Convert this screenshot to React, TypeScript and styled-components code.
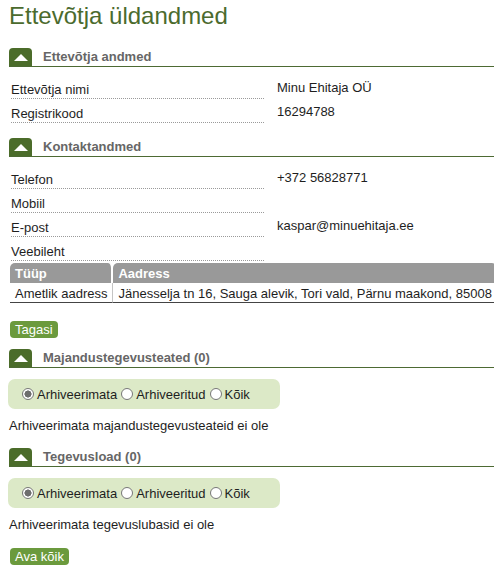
import React, {FC} from 'react'
import styled, {createGlobalStyle} from 'styled-components'

const Global = createGlobalStyle`
html, body { overflow-x: hidden; }
body {
  margin: 0;
  padding: 0 0 0 9px;
  background: #fff;
  color: #1e1e1e;
  font-family: "Liberation Sans", Arial, sans-serif;
  font-size: 13px;
  line-height: 15px;
}
* { box-sizing: border-box; }
`

const Title = styled.h1`
margin: 2px 0 0;
font-size: 24px;
line-height: 27px;
font-weight: normal;
color: #4b6b2e;
`

const Head = styled.div<{top: number}>`
display: flex;
align-items: flex-end;
height: 19px;
margin-top: ${p => p.top}px;
border-bottom: 1px solid #4d6a33;
span {
  font-weight: bold;
  color: #666;
  padding: 0 0 2px 11px;
}
`

const Tab = styled.div`
width: 23px;
height: 18px;
background: #4b6c2a;
border-radius: 4px 4px 0 0;
display: flex;
align-items: center;
justify-content: center;
svg { width: 14px; height: 7px; margin-top: 1px; }
`

const Rows = styled.div`
margin: 8px 0 0 2px;
`

const Row = styled.div`
display: grid;
grid-template-columns: 253px 1fr;
column-gap: 13px;
height: 24px;
.label {
  padding-top: 7px;
  border-bottom: 1px dotted #9a9a9a;
}
.value {
  padding-top: 5px;
}
`

const Table = styled.table`
margin: 2px 0 0 1px;
border-collapse: separate;
border-spacing: 0;
white-space: nowrap;
th {
  background: #999;
  color: #fff;
  font-weight: bold;
  text-align: left;
  height: 20px;
  padding: 1px 5px 0;
  border-radius: 5px 5px 0 0;
}
th:first-child { width: 103px; border-right: 2px solid #fff; }
td {
  height: 20px;
  padding: 1px 5px 0;
  border-bottom: 1px solid #444;
}
td:first-child { border-right: 1px solid #c4c4c4; }
`

const Button = styled.button<{top: number}>`
display: block;
margin: ${p => p.top}px 0 0 1px;
height: 17px;
padding: 0 5px;
border: none;
border-radius: 4px;
background: #6b9a3d;
color: #fff;
font-family: inherit;
font-size: 13px;
line-height: 17px;
`

const Filter = styled.div`
display: flex;
align-items: center;
width: 272px;
height: 30px;
margin: 11px 0 0 -1px;
padding-left: 14px;
background: #dce9c7;
border-radius: 7px;
label { display: flex; align-items: center; margin-right: 4px; }
input {
  appearance: none;
  width: 12px;
  height: 12px;
  margin: 0 3px 0 0;
  border: 1px solid #777;
  border-radius: 50%;
  background: #fff;
}
input:checked {
  background: radial-gradient(circle, #6d6d6d 0 3.3px, #fff 3.8px);
}
`

const Note = styled.p`
margin: 9px 0 0;
`

const Arrow: FC = () => (
  <svg viewBox="0 0 14 7"><polygon points="0,7 7,0 14,7" fill="#fff" /></svg>
)

const SectionHead: FC<{title: string; top: number}> = ({title, top}) => (
  <Head top={top}>
    <Tab><Arrow /></Tab>
    <span>{title}</span>
  </Head>
)

const Radios: FC<{name: string}> = ({name}) => (
  <Filter>
    <label><input type="radio" name={name} defaultChecked />Arhiveerimata</label>
    <label><input type="radio" name={name} />Arhiveeritud</label>
    <label><input type="radio" name={name} />Kõik</label>
  </Filter>
)

const App: FC = () => {
  const general = [['Ettevõtja nimi', 'Minu Ehitaja OÜ'], ['Registrikood', '16294788']]
  const contact = [['Telefon', '+372 56828771'], ['Mobiil', ''], ['E-post', 'kaspar@minuehitaja.ee'], ['Veebileht', '']]
  return (
    <>
      <Global />
      <Title>Ettevõtja üldandmed</Title>
      <SectionHead title="Ettevõtja andmed" top={19} />
      <Rows>
        {general.map(([k, v]) => (
          <Row key={k}><span className="label">{k}</span><span className="value">{v}</span></Row>
        ))}
      </Rows>
      <SectionHead title="Kontaktandmed" top={15} />
      <Rows>
        {contact.map(([k, v]) => (
          <Row key={k}><span className="label">{k}</span><span className="value">{v}</span></Row>
        ))}
      </Rows>
      <Table>
        <thead>
          <tr><th>Tüüp</th><th>Aadress</th></tr>
        </thead>
        <tbody>
          <tr><td>Ametlik aadress</td><td>Jänesselja tn 16, Sauga alevik, Tori vald, Pärnu maakond, 85008</td></tr>
        </tbody>
      </Table>
      <Button top={18}>Tagasi</Button>
      <SectionHead title="Majandustegevusteated (0)" top={11} />
      <Radios name="mt" />
      <Note>Arhiveerimata majandustegevusteateid ei ole</Note>
      <SectionHead title="Tegevusload (0)" top={15} />
      <Radios name="tl" />
      <Note>Arhiveerimata tegevuslubasid ei ole</Note>
      <Button top={16}>Ava kõik</Button>
    </>
  )
}

export default App
